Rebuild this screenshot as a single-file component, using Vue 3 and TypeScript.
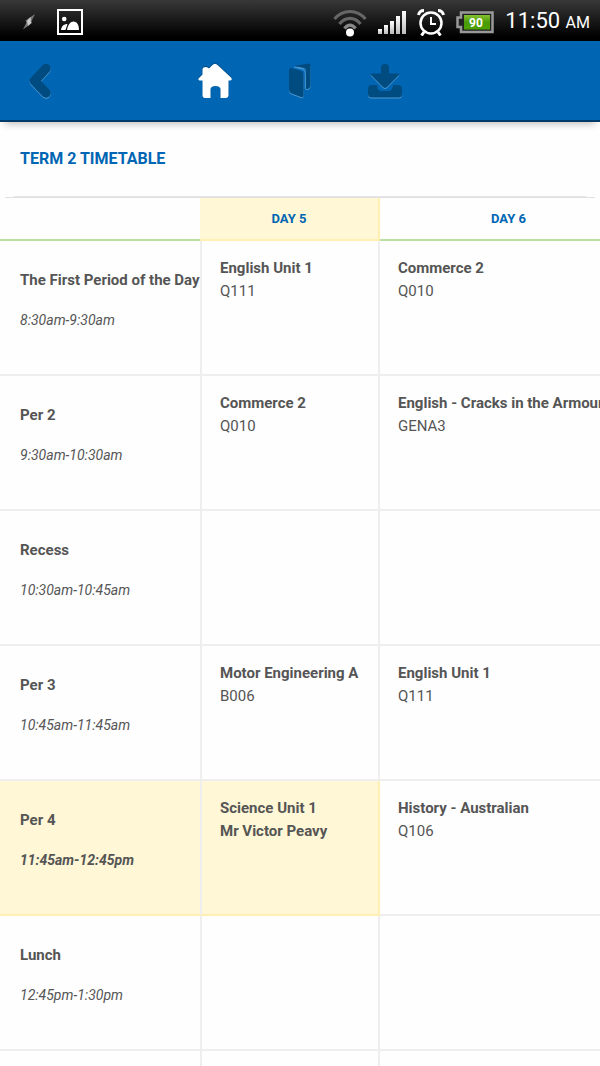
<script setup lang="ts">
interface Lesson {
  title: string
  detail?: string
  strongDetail?: boolean
}

interface Period {
  name: string
  time: string
  current?: boolean
  lessons: (Lesson | null)[]
}

const days = [
  { name: 'DAY 5', today: true },
  { name: 'DAY 6', today: false },
]

const periods: Period[] = [
  {
    name: 'The First Period of the Day',
    time: '8:30am-9:30am',
    lessons: [
      { title: 'English Unit 1', detail: 'Q111' },
      { title: 'Commerce 2', detail: 'Q010' },
    ],
  },
  {
    name: 'Per 2',
    time: '9:30am-10:30am',
    lessons: [
      { title: 'Commerce 2', detail: 'Q010' },
      { title: 'English - Cracks in the Armour', detail: 'GENA3' },
    ],
  },
  { name: 'Recess', time: '10:30am-10:45am', lessons: [null, null] },
  {
    name: 'Per 3',
    time: '10:45am-11:45am',
    lessons: [
      { title: 'Motor Engineering A', detail: 'B006' },
      { title: 'English Unit 1', detail: 'Q111' },
    ],
  },
  {
    name: 'Per 4',
    time: '11:45am-12:45pm',
    current: true,
    lessons: [
      { title: 'Science Unit 1', detail: 'Mr Victor Peavy', strongDetail: true },
      { title: 'History - Australian', detail: 'Q106' },
    ],
  },
  { name: 'Lunch', time: '12:45pm-1:30pm', lessons: [null, null] },
  { name: '', time: '', lessons: [null, null] },
]
</script>

<template>
  <div class="screen">
    <div class="status">
      <div class="status-left">
        <svg width="16" height="18" viewBox="0 0 16 18" aria-hidden="true">
          <path d="M14 1 L10.500 8 L11 10 L2 16.500 L5.500 9.500 L4.500 7.500 Z" fill="#777" />
          <path d="M9.500 4 L10 10 L7 13 L6 8 Z" fill="#ccc" />
        </svg>
        <svg width="26" height="26" viewBox="0 0 26 26" aria-hidden="true">
          <rect x="1" y="1" width="24" height="24" fill="none" stroke="#fff" stroke-width="2" />
          <circle cx="7.200" cy="10" r="2.300" fill="#fff" />
          <path d="M4 21 C4.500 17 7 15 10.500 15 L8.500 21 Z M10 21 C11 15.500 13.500 12.500 16.500 12.500 C20 12.500 22 16 22 21 Z" fill="#fff" />
        </svg>
      </div>
      <div class="status-right">
        <svg width="34" height="30" viewBox="0 0 34 30" aria-hidden="true" fill="none" stroke="#666" stroke-width="3.200">
          <path d="M1.500 12 C10 2 24 2 32.500 12" />
          <path d="M6.500 17 C12.500 9.500 21.500 9.500 27.500 17" />
          <path d="M11.500 21.500 C15 17 19 17 22.500 21.500" stroke="#888" />
          <circle cx="17" cy="25.500" r="4" fill="#fff" stroke="none" />
        </svg>
        <svg class="signal" width="28" height="24" viewBox="0 0 28 24" aria-hidden="true">
          <defs>
            <linearGradient id="signal" x1="0" y1="0" x2="0" y2="1">
              <stop offset="0" stop-color="#fff" />
              <stop offset="1" stop-color="#bbb" />
            </linearGradient>
          </defs>
          <g fill="url(#signal)">
            <rect x="0" y="19" width="4" height="5" />
            <rect x="6" y="15" width="4" height="9" />
            <rect x="12" y="11" width="4" height="13" />
            <rect x="18" y="6" width="4" height="18" />
            <rect x="24" y="1" width="4" height="23" />
          </g>
        </svg>
        <svg width="28" height="28" viewBox="0 0 28 28" aria-hidden="true" fill="none" stroke="#fff">
          <circle cx="14" cy="15" r="10.500" stroke-width="2.500" />
          <path d="M14 9 V16 H19" stroke-width="2" />
          <path d="M1.500 7 Q2.500 2.500 7 2.500 M21 2.500 Q25.500 2.500 26.500 7" stroke-width="3" />
          <path d="M7 24 L4.500 27.500 M21 24 L23.500 27.500" stroke-width="3" />
        </svg>
        <svg width="38" height="24" viewBox="0 0 38 24" aria-label="Battery 90%" role="img">
          <defs>
            <linearGradient id="charge" x1="0" y1="0" x2="0" y2="1">
              <stop offset="0" stop-color="#86c232" />
              <stop offset="0.500" stop-color="#4a9a08" />
              <stop offset="1" stop-color="#4ca300" />
            </linearGradient>
          </defs>
          <path d="M5 2.500 H36.500 V22 H5 V17 H1.500 V7.500 H5 Z" fill="#222" stroke="#999" stroke-width="2.500" />
          <rect x="8" y="5" width="26" height="14.500" fill="url(#charge)" />
          <text x="20" y="16.500" text-anchor="middle" class="battery-text">90</text>
        </svg>
        <span class="clock">11:50 <span class="meridiem">AM</span></span>
      </div>
    </div>

    <nav class="toolbar">
      <button type="button" class="tool" aria-label="Back">
        <svg width="24" height="38" viewBox="0 0 24 38" aria-hidden="true" fill="none" stroke-linecap="round" stroke-linejoin="round" stroke-width="9.500">
          <path d="M18 6.500 L6.500 19 L18 31" stroke="#4d9ad2" transform="translate(0 1)" />
          <path d="M18 6.500 L6.500 19 L18 31" stroke="#004b80" />
        </svg>
      </button>
      <div class="tools">
        <button type="button" class="tool" aria-label="Home">
          <svg width="36" height="38" viewBox="0 0 36 38" aria-hidden="true">
            <path d="M18 1.800 Q19.500 2 20.500 3 L34.500 16 Q35.500 17.800 33.500 18.500 H31.500 V33 Q31.500 36 28.500 36 H23.500 V27 Q23 24 18.500 24 Q14 24 13.500 27 V36 H8 Q5.500 36 5.500 33 V18.500 H2.500 Q0.500 17.500 2 16 L5.500 12.500 V7 Q6 5 8.500 5 Q11 5 12 6.500 L15.500 3 Q16.500 2 18 1.800 Z" fill="#004b80" transform="translate(0 -1)" />
            <path d="M18 1.800 Q19.500 2 20.500 3 L34.500 16 Q35.500 17.800 33.500 18.500 H31.500 V33 Q31.500 36 28.500 36 H23.500 V27 Q23 24 18.500 24 Q14 24 13.500 27 V36 H8 Q5.500 36 5.500 33 V18.500 H2.500 Q0.500 17.500 2 16 L5.500 12.500 V7 Q6 5 8.500 5 Q11 5 12 6.500 L15.500 3 Q16.500 2 18 1.800 Z" fill="#fff" />
          </svg>
        </button>
        <button type="button" class="tool" aria-label="Diary">
          <svg width="24" height="38" viewBox="0 0 24 38" aria-hidden="true">
            <g fill="#4d9ad2" transform="translate(0 1)">
              <path d="M6 4 L20.500 1.500 Q22.500 1.500 22.500 3.500 V23 Q22.500 26 19.500 27 L18 27 V9 Q18 7 16 6 Z" />
              <path d="M3 6 L13 9 Q15.500 10 15.500 13 V33.500 Q15.500 36 13 35 L3.500 31.500 Q1 30.500 1 27.500 V8 Q1 6 3 6 Z" />
            </g>
            <path d="M6 4 L20.500 1.500 Q22.500 1.500 22.500 3.500 V23 Q22.500 26 19.500 27 L18 27 V9 Q18 7 16 6 Z" fill="#004b80" />
            <path d="M3 6 L13 9 Q15.500 10 15.500 13 V33.500 Q15.500 36 13 35 L3.500 31.500 Q1 30.500 1 27.500 V8 Q1 6 3 6 Z" fill="#004b80" />
            <path d="M6 5 L15 7.500 Q17.300 8.500 17.300 11.500 V27" fill="none" stroke="#4d9ad2" />
          </svg>
        </button>
        <button type="button" class="tool" aria-label="Downloads">
          <svg width="36" height="38" viewBox="0 0 36 38" aria-hidden="true">
            <path d="M5 23 H10 L11 27 Q12 29 14 29 H22 Q24 29 25 27 L26 23 H31 Q35 23 35 27 V32 Q35 35.500 31.500 35.500 H4.500 Q1 35.500 1 32 V27 Q1 23 5 23 Z" fill="#4d9ad2" transform="translate(0 1)" />
            <path d="M5 23 H10 L11 27 Q12 29 14 29 H22 Q24 29 25 27 L26 23 H31 Q35 23 35 27 V32 Q35 35.500 31.500 35.500 H4.500 Q1 35.500 1 32 V27 Q1 23 5 23 Z" fill="#004b80" />
            <path d="M14 11.500 V5 Q14 2 18 2 Q22 2 22 5 V11.500 H31 Q33 11.500 31.500 13.500 L20 25 Q18 27 16 25 L4.500 13.500 Q3 11.500 5 11.500 Z" fill="#4d9ad2" transform="translate(0 1)" />
            <path d="M14 11.500 V5 Q14 2 18 2 Q22 2 22 5 V11.500 H31 Q33 11.500 31.500 13.500 L20 25 Q18 27 16 25 L4.500 13.500 Q3 11.500 5 11.500 Z" fill="#004b80" />
          </svg>
        </button>
      </div>
    </nav>

    <main class="content">
      <h1>TERM 2 TIMETABLE</h1>
      <div class="rule"></div>
      <table>
        <colgroup>
          <col class="col-period" />
          <col class="col-day" />
          <col />
        </colgroup>
        <thead>
          <tr>
            <td></td>
            <th v-for="day in days" :key="day.name" scope="col" :class="{ today: day.today }">{{ day.name }}</th>
          </tr>
        </thead>
        <tbody>
          <tr v-for="(period, i) in periods" :key="i" :class="{ current: period.current }">
            <th scope="row">
              <div class="strong">{{ period.name }}</div>
              <div class="period-time">{{ period.time }}</div>
            </th>
            <td v-for="(lesson, j) in period.lessons" :key="j" :class="{ today: days[j].today }">
              <template v-if="lesson">
                <div class="strong">{{ lesson.title }}</div>
                <div :class="{ strong: lesson.strongDetail }">{{ lesson.detail }}</div>
              </template>
            </td>
          </tr>
        </tbody>
      </table>
    </main>
  </div>
</template>

<style>
body {
  background: #fefefe;
}
</style>

<style scoped>
.screen {
  display: flex;
  flex-direction: column;
  height: 100vh;
  overflow: hidden;
  font-family: Roboto, "Liberation Sans", sans-serif;
  font-size: 15px;
  line-height: 23px;
  color: #555;
}

.status {
  flex: none;
  display: flex;
  align-items: center;
  justify-content: space-between;
  box-sizing: border-box;
  height: 41px;
  padding: 2px 10px 0 21px;
  background: linear-gradient(#383838, #000 90%);
  color: #fff;
}

.status-left {
  display: flex;
  align-items: center;
  gap: 20px;
}

.status-right {
  display: flex;
  align-items: center;
  gap: 11px;
}

.status svg,
.tool svg {
  display: block;
}

.battery-text {
  font-size: 12px;
  font-weight: 700;
  fill: #fff;
}

.clock {
  font-size: 22px;
  white-space: nowrap;
}

.meridiem {
  font-size: 16px;
}

.toolbar {
  flex: none;
  display: flex;
  align-items: center;
  box-sizing: border-box;
  height: 81px;
  padding-left: 28px;
  background: #0066b3;
  border-bottom: 2px solid #003a66;
  box-shadow: 0 7px 7px -5px rgba(0, 0, 0, 0.25);
}

.tools {
  display: flex;
  gap: 55px;
  margin-left: 145px;
}

.tool {
  padding: 0;
  border: 0;
  background: none;
}

.content {
  flex: 1;
  min-height: 0;
  overflow: auto;
  scrollbar-width: none;
}

h1 {
  margin: 0;
  padding: 25px 20px 26px;
  font-size: 16px;
  line-height: 23px;
  font-weight: 700;
  color: #0066b3;
}

.rule {
  margin: 0 5px;
  padding: 0 9px;
  border-bottom: 1px solid #e0e0e0;
}

.rule::before {
  content: "";
  display: block;
  height: 1px;
  background: #e6e6e6;
}

table {
  width: 100%;
  min-width: 637px;
  table-layout: fixed;
  border-collapse: separate;
  border-spacing: 0;
}

.col-period {
  width: 200px;
}

.col-day {
  width: 180px;
}

th,
td {
  box-sizing: border-box;
  padding: 0;
  text-align: left;
  vertical-align: top;
  white-space: nowrap;
}

thead th,
thead td {
  height: 43px;
  border-bottom: 2px solid #b9dfa5;
}

thead th {
  font-size: 13px;
  font-weight: 700;
  text-align: center;
  vertical-align: middle;
  color: #0066b3;
}

thead .today {
  background: #fff7d6;
  border-right: 2px solid #ffefb0;
  border-bottom-color: #ffefb0;
}

tbody th,
tbody td {
  height: 135px;
  border-bottom: 2px solid #eee;
}

tbody th {
  padding: 28px 0 0 20px;
  font-weight: 400;
}

tbody td {
  padding: 16px 0 0 18px;
}

tbody .today {
  border-left: 2px solid #eee;
  border-right: 2px solid #eee;
}

.strong {
  font-weight: 700;
}

.period-time {
  padding-top: 17px;
  font-size: 14px;
  font-style: italic;
}

.current th,
.current .today {
  background: #fff7d6;
  border-bottom-color: #ffefb0;
}

.current .today {
  border-right-color: #ffefb0;
}

.current .period-time {
  font-weight: 700;
}
</style>
